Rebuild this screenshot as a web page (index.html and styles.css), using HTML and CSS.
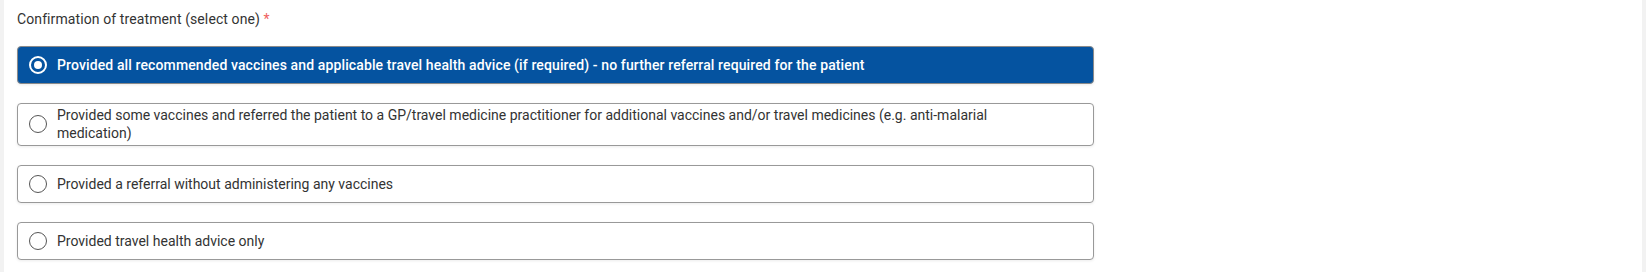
FILE: index.html
```html
<!DOCTYPE html>
<html lang="en">
<head>
  <meta charset="UTF-8">
  <title>Confirmation of treatment</title>
  <link rel="stylesheet" href="styles.css">
</head>
<body>
  <div class="page">
    <fieldset class="choice-group">
      <legend class="group-label">Confirmation of treatment (select one) <span class="required">*</span></legend>

      <label class="option selected">
        <input type="radio" name="treatment" value="all" checked>
        <span class="radio"></span>
        <span class="option-text">Provided all recommended vaccines and applicable travel health advice (if required) - no further referral required for the patient</span>
      </label>

      <label class="option">
        <input type="radio" name="treatment" value="some">
        <span class="radio"></span>
        <span class="option-text">Provided some vaccines and referred the patient to a GP/travel medicine practitioner for additional vaccines and/or travel medicines (e.g. anti-malarial medication)</span>
      </label>

      <label class="option">
        <input type="radio" name="treatment" value="referral">
        <span class="radio"></span>
        <span class="option-text">Provided a referral without administering any vaccines</span>
      </label>

      <label class="option">
        <input type="radio" name="treatment" value="advice">
        <span class="radio"></span>
        <span class="option-text">Provided travel health advice only</span>
      </label>
    </fieldset>
  </div>
</body>
</html>
```

FILE: styles.css
```css
html, body {
  margin: 0;
  height: 100%;
}
body {
  font-family: Roboto, "Liberation Sans", Arial, sans-serif;
  font-size: 14px;
  color: #333;
  background-color: #f2f2f2;
  padding: 0 4px 0 4px;
  box-sizing: border-box;
}
.page {
  background-color: #fff;
  height: 100%;
  padding: 9px 12px 0 13px;
  box-sizing: border-box;
}
.choice-group {
  border: none;
  margin: 0;
  padding: 0;
  width: 1077px;
  display: flex;
  flex-direction: column;
  gap: 19px;
}
.group-label {
  padding: 0;
  line-height: 20px;
  margin-bottom: 17px;
  color: #333;
  letter-spacing: 0.1px;
}
.required {
  color: #f0615e;
}
.option {
  display: flex;
  align-items: center;
  gap: 10px;
  box-sizing: border-box;
  min-height: 38px;
  padding: 2px 11px 3px;
  border: 1px solid #999;
  border-radius: 4px;
  background-color: #fff;
  box-shadow: 0 1px 3px rgba(0,0,0,0.08);
  line-height: 18px;
  cursor: pointer;
}
.option input {
  display: none;
}
.radio {
  flex: none;
  width: 18px;
  height: 18px;
  box-sizing: border-box;
  border: 1.5px solid #555;
  border-radius: 50%;
  position: relative;
}
.option-text {
  padding-right: 60px;
}
.selected {
  background-color: #0553a0;
  border-color: #8a8a8a;
  color: #fff;
  font-weight: 500;
  letter-spacing: 0.12px;
}
.selected .radio {
  border: 2px solid #fff;
}
.selected .radio::after {
  content: "";
  position: absolute;
  left: 3px;
  top: 3px;
  width: 8px;
  height: 8px;
  border-radius: 50%;
  background-color: #fff;
}
```
